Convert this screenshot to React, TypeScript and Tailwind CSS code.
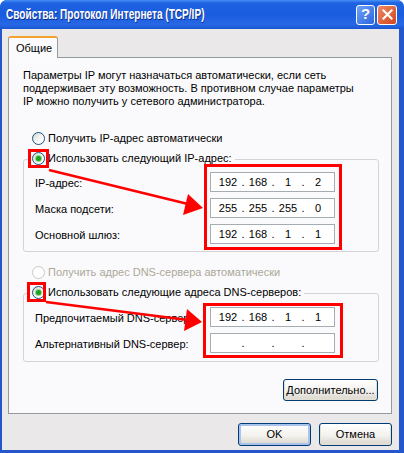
import { Fragment } from "react";

const FONT = "font-['Liberation_Sans',Arial,sans-serif]";

function Radio({ checked, disabled }: { checked?: boolean; disabled?: boolean }) {
  return (
    <span
      className={
        disabled
          ? "flex h-[13px] w-[13px] shrink-0 items-center justify-center rounded-full border border-[#cac8bb] bg-white"
          : "flex h-[13px] w-[13px] shrink-0 items-center justify-center rounded-full border border-[#1c5180] bg-[linear-gradient(135deg,#d6d6d0,#ffffff_70%)]"
      }
    >
      {checked && <span className="h-[5px] w-[5px] rounded-full bg-[#1fa01f] shadow-[0_0_0_1px_#8fd68f]" />}
    </span>
  );
}

function IpField({ parts }: { parts: string[] }) {
  return (
    <div className="flex h-[20px] w-[125px] items-center border border-[#a5acb2] bg-white pl-[5px]">
      {parts.map((p, i) => (
        <Fragment key={i}>
          {i > 0 && <span className="w-[6px] text-center">.</span>}
          <span className="w-[24px] text-center">{p}</span>
        </Fragment>
      ))}
    </div>
  );
}

function XpButton({ label, def, w }: { label: string; def?: boolean; w: string }) {
  return (
    <div
      className={`flex items-center justify-center rounded-[3px] border border-[#003c74] bg-[linear-gradient(to_bottom,#ffffff,#f3f2ee_55%,#d8d3ca)] ${w} ${
        def ? "shadow-[inset_0_0_0_2px_#a8c2ee]" : "shadow-[inset_0_-1px_0_1px_#e3ded4]"
      }`}
    >
      {label}
    </div>
  );
}

const IP_ROWS = [
  { label: "IP-адрес:", parts: ["192", "168", "1", "2"] },
  { label: "Маска подсети:", parts: ["255", "255", "255", "0"] },
  { label: "Основной шлюз:", parts: ["192", "168", "1", "1"] },
];

const DNS_ROWS = [
  { label: "Предпочитаемый DNS-сервер:", parts: ["192", "168", "1", "1"] },
  { label: "Альтернативный DNS-сервер:", parts: ["", "", "", ""] },
];

export default function App() {
  return (
    <div className={`relative h-[453px] w-[404px] overflow-hidden bg-white text-[11px] text-black ${FONT}`}>
      <div className="flex h-full flex-col rounded-t-[7px] bg-[#2457cc]">
        {/* title bar */}
        <div className="flex h-[29px] shrink-0 items-center rounded-t-[7px] bg-[linear-gradient(to_bottom,#4a90f5_0%,#1e63e2_10%,#1a5cdf_50%,#2668e4_85%,#1b56d2_100%)] pl-[6px] pr-[7px]">
          <div className="min-w-0 flex-1">
            <span className="inline-block origin-left scale-x-[0.72] whitespace-nowrap text-[14px] font-bold text-white [text-shadow:1px_1px_#0b2a8a]">
              Свойства: Протокол Интернета (TCP/IP)
            </span>
          </div>
          <div className="flex gap-[2px]">
            <div className="flex h-[20px] w-[19px] items-center justify-center rounded-[3px] border border-white bg-[linear-gradient(135deg,#6ea2f8,#2c66dc)] text-[15px] font-bold text-white">
              ?
            </div>
            <div className="flex h-[20px] w-[20px] items-center justify-center rounded-[3px] border border-white bg-[linear-gradient(135deg,#f08a64,#d2441c)]">
              <svg width="11" height="11" viewBox="0 0 11 11">
                <path d="M1.5 1.5 L9.5 9.5 M9.5 1.5 L1.5 9.5" stroke="#fff" strokeWidth="2.2" strokeLinecap="square" />
              </svg>
            </div>
          </div>
        </div>

        {/* frame + body */}
        <div className="flex-1 pb-[3px] pl-[2px] pr-[5px]">
          <div className="flex h-full flex-col bg-[#ebe8ea] pl-[6px] pr-[7px] pt-[7px]">
            {/* tab */}
            <div className="relative z-10 -mb-px flex h-[22px] w-[50px] items-center rounded-t-[3px] border-x border-t-[2px] border-x-[#919b9c] border-t-[#f3a32e] bg-[#fbfbfd] pl-[7px]">
              Общие
            </div>
            {/* panel */}
            <div className="flex h-[357px] flex-col border border-[#919b9c] bg-[#fafafc] pl-[14px] pr-[12px] pt-[11px]">
              <p className="leading-[13px]">
                Параметры IP могут назначаться автоматически, если сеть
                <br />
                поддерживает эту возможность. В противном случае параметры
                <br />
                IP можно получить у сетевого администратора.
              </p>

              <div className="mt-[20px] flex h-[20px] items-center gap-[3px] pl-[9px]">
                <Radio />
                <span>Получить IP-адрес автоматически</span>
              </div>

              <div className="mt-[11px] rounded-[3px] border border-[#d5d3d6] pb-[7px]">
                <div className="-mt-[12px] ml-[4px] flex h-[20px] w-fit items-center gap-[3px] bg-[#fafafc] pl-[4px] pr-[3px]">
                  <Radio checked />
                  <span>Использовать следующий IP-адрес:</span>
                </div>
                <div className="flex flex-col gap-[6px] pl-[11px] pr-[43px] pt-[4px]">
                  {IP_ROWS.map((r) => (
                    <div key={r.label} className="flex h-[20px] items-center justify-between">
                      <span className="pt-[2px]">{r.label}</span>
                      <IpField parts={r.parts} />
                    </div>
                  ))}
                </div>
              </div>

              <div className="mt-[10px] flex h-[20px] items-center gap-[3px] pl-[9px] text-[#aca899]">
                <Radio disabled />
                <span>Получить адрес DNS-сервера автоматически</span>
              </div>

              <div className="mt-[11px] rounded-[3px] border border-[#d5d3d6] pb-[8px]">
                <div className="-mt-[12px] ml-[4px] flex h-[20px] w-fit items-center gap-[3px] bg-[#fafafc] pl-[4px] pr-[3px]">
                  <Radio checked />
                  <span>Использовать следующие адреса DNS-серверов:</span>
                </div>
                <div className="flex flex-col gap-[6px] pl-[11px] pr-[43px] pt-[5px]">
                  {DNS_ROWS.map((r) => (
                    <div key={r.label} className="flex h-[20px] items-center justify-between">
                      <span className="pt-[2px]">{r.label}</span>
                      <IpField parts={r.parts} />
                    </div>
                  ))}
                </div>
              </div>

              <div className="mt-[17px] flex justify-end pr-px">
                <XpButton label="Дополнительно..." w="h-[22px] w-[95px]" />
              </div>
            </div>

            {/* dialog buttons */}
            <div className="mt-[9px] flex justify-end gap-[8px]">
              <XpButton label="OK" def w="h-[23px] w-[73px]" />
              <XpButton label="Отмена" w="h-[23px] w-[73px]" />
            </div>
          </div>
        </div>
      </div>

      {/* red annotations */}
      <svg className="pointer-events-none absolute inset-0" width="404" height="453" viewBox="0 0 404 453">
        <g fill="none" stroke="#f00" strokeWidth="3">
          <rect x="29.5" y="150.5" width="18" height="16" />
          <rect x="205.5" y="165.5" width="135" height="83" />
          <rect x="28.5" y="283.5" width="16" height="17" />
          <rect x="204.5" y="304.5" width="137" height="52" />
        </g>
        <g stroke="#f00" strokeWidth="2.5" fill="#f00">
          <line x1="49" y1="170" x2="188" y2="204" />
          <polygon points="203,208 188,194 183,215" stroke="none" />
          <line x1="46" y1="302" x2="188" y2="320" />
          <polygon points="202,322 187,309 184,331" stroke="none" />
        </g>
      </svg>
    </div>
  );
}
